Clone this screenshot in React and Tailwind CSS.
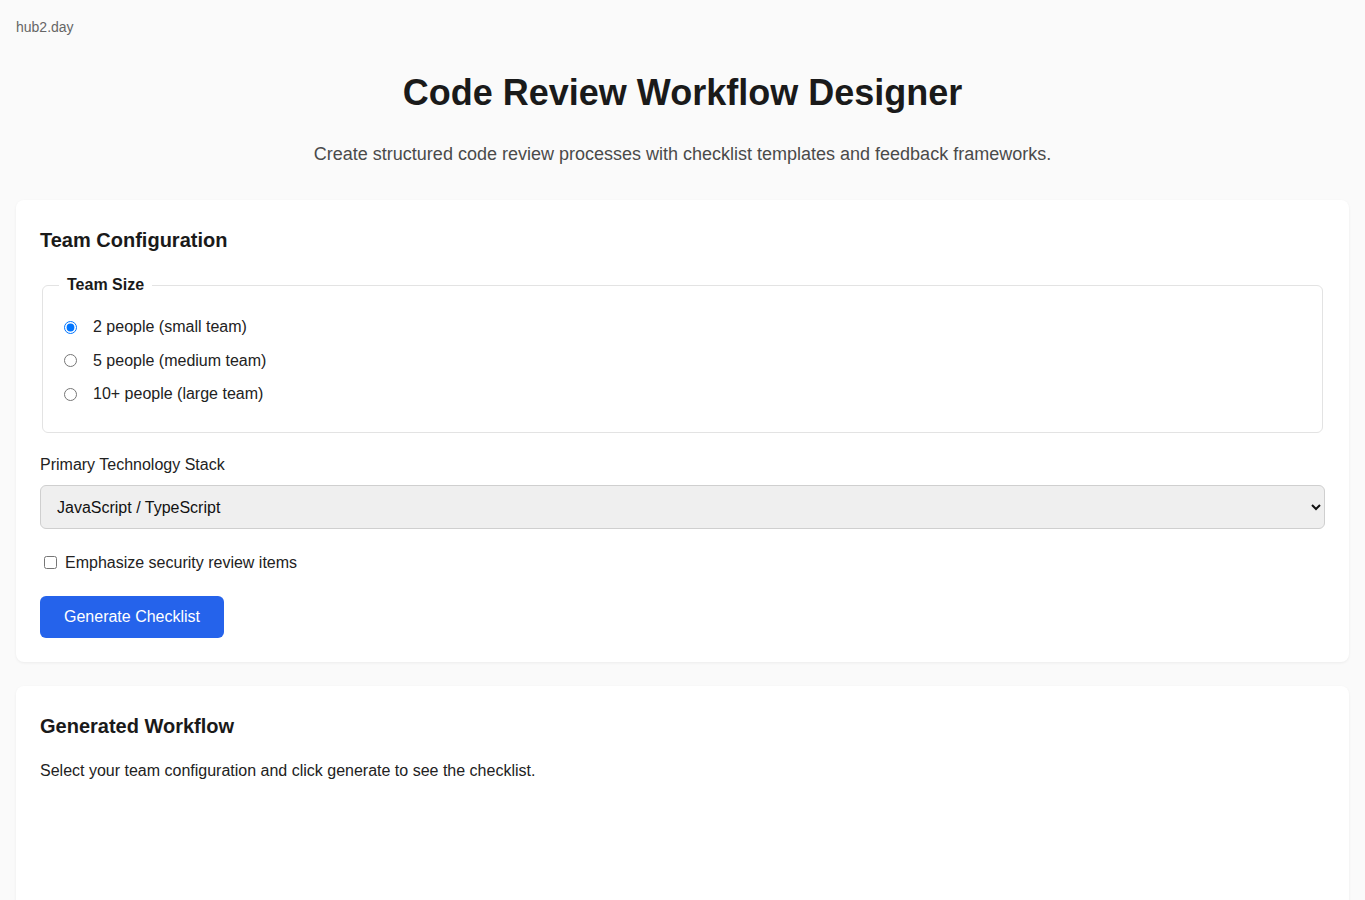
import React from "react";

export default function App() {
  return (
    <div className="min-h-screen bg-[#fafafa] px-4 pt-[17px] text-[#222] font-['Liberation_Sans',Arial,sans-serif]">
      <div className="text-[14px] leading-[21px] text-[#666]">hub2.day</div>
      <h1 className="mt-[33px] text-center text-[36px] font-bold leading-[43px] text-[#1a1a1a]">
        Code Review Workflow Designer
      </h1>
      <p className="mt-[27px] text-center text-[18px] leading-[27px] text-[#4a4a4a]">
        Create structured code review processes with checklist templates and feedback frameworks.
      </p>

      <section className="mt-[32px] rounded-lg bg-white px-6 pb-6 pt-[25px] shadow-[0_1px_3px_rgba(0,0,0,0.06)]">
        <h2 className="mb-[18px] text-[20px] font-bold leading-[30px] text-[#1a1a1a]">Team Configuration</h2>
        <fieldset className="mx-[2px] rounded-md border border-[#e3e3e3] px-4 pb-4 pt-[18px]">
          <legend className="px-2 text-[16px] font-bold leading-[24px] text-[#1a1a1a]">Team Size</legend>
          {[
            ["2 people (small team)", true],
            ["5 people (medium team)", false],
            ["10+ people (large team)", false],
          ].map(([t, c]) => (
            <label key={t} className="mb-[9.5px] flex h-[24px] items-center text-[16px]">
              <input
                type="radio"
                name="size"
                defaultChecked={c}
                className="ml-[5px] mr-[16px] h-[13px] w-[13px]"
              />
              <span>{t}</span>
            </label>
          ))}
        </fieldset>

        <label className="mt-[20.5px] block text-[16px] leading-[24px]">Primary Technology Stack</label>
        <select className="mt-[8px] block h-[44px] w-full rounded-md border border-[#cfcfcf] bg-[#efefef] px-3 text-[16px] text-[#111]">
          <option>JavaScript / TypeScript</option>
          <option>Python</option>
          <option>Java</option>
        </select>

        <label className="mt-[21.5px] flex h-[24px] items-center text-[16px]">
          <input type="checkbox" className="ml-[4px] mr-[8px] h-[13px] w-[13px]" />
          <span>Emphasize security review items</span>
        </label>

        <button className="mt-[21px] h-[42px] rounded-md bg-[#2563eb] px-6 text-[16px] text-white">
          Generate Checklist
        </button>
      </section>

      <section className="mt-6 min-h-[300px] rounded-lg bg-white px-6 pb-6 pt-[25px] shadow-[0_1px_3px_rgba(0,0,0,0.06)]">
        <h2 className="mb-[18px] text-[20px] font-bold leading-[30px] text-[#1a1a1a]">Generated Workflow</h2>
        <p className="text-[16px] leading-[24px]">
          Select your team configuration and click generate to see the checklist.
        </p>
      </section>
    </div>
  );
}
